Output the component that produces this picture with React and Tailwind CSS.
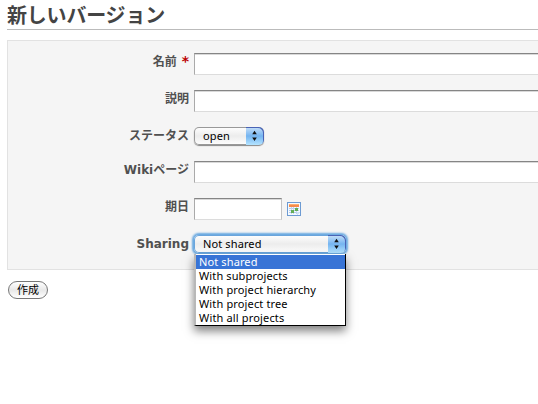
const labelFont = "font-['DejaVu_Sans','Noto_Sans_CJK_JP',sans-serif]";
const menuFont = "font-['Noto_Sans','Noto_Sans_CJK_JP',sans-serif]";

const options = [
  ['Not shared', 'tracking-[0.12px]'],
  ['With subprojects', 'tracking-[0.12px]'],
  ['With project hierarchy', 'tracking-[0.14px]'],
  ['With project tree', 'tracking-[0.14px]'],
  ['With all projects', 'tracking-[0.16px]'],
];

function Row({ label, height = 'h-[37px]', children }) {
  return (
    <div className={`flex items-start ${height}`}>
      <div className="w-[181px] shrink-0 whitespace-nowrap text-right text-[12px] leading-[18px] font-bold text-[#505050]">
        {label}
      </div>
      <div className="ml-[5px] flex min-w-0 flex-1 items-start">{children}</div>
    </div>
  );
}

function TextInput({ className }) {
  return (
    <div
      className={`h-[22px] border border-t-[#858585] border-r-[#c4c4c4] border-b-[#dcdcdc] border-l-[#aaaaaa] bg-white shadow-[inset_0_1px_0_#d9d9d9] ${className}`}
    />
  );
}

function Arrows() {
  return (
    <svg className="h-[18px] w-[17px]" viewBox="0 0 17 18">
      <path d="M8.5 3.8 L10.8 7.2 H6.2 Z M8.5 14 L10.8 10.6 H6.2 Z" fill="#111" />
    </svg>
  );
}

function Select({ value, className }) {
  return (
    <div
      className={`flex h-[18px] overflow-hidden rounded-[5px] bg-linear-to-b from-white via-[#ececec] to-white text-[11px] leading-[18px] text-black ${menuFont} ${className}`}
    >
      <span className="flex-1 pl-[9px] tracking-[0.12px] whitespace-nowrap">{value}</span>
      <span className="w-[18px] rounded-r-[5px] bg-linear-to-b from-[#c7e0f8] via-[#74b4f0] to-[#b4e4ff] shadow-[inset_-1px_1px_0_#4a63b5]">
        <Arrows />
      </span>
    </div>
  );
}

function CalendarIcon() {
  return (
    <svg className="mt-[4px] ml-[5px] h-[14px] w-[14px]" viewBox="0 0 14 14" shapeRendering="crispEdges">
      <rect width="14" height="14" fill="#6d9bd3" />
      <rect x="1" y="1" width="12" height="12" fill="#f5faff" />
      <rect x="2" y="2" width="10" height="3" fill="#f58b4c" />
      <rect x="2" y="2" width="10" height="1" fill="#ffad70" />
      <path d="M2 6h10v1H2z M2 8h10v1H2z M2 10h8v1H2z" fill="#b5cbea" />
      <path d="M4 5h1v7H4z M6 5h1v7H6z M9 5h1v7H9z" fill="#c3d5ee" />
      <path d="M8 6h3v3H8z M4 8h3v3H4z" fill="#64ad55" />
      <path d="M10 13v-3h3z" fill="#cfe2f7" />
    </svg>
  );
}

export default function App() {
  return (
    <div className={`h-[404px] w-[538px] overflow-hidden bg-white pl-[7px] ${labelFont}`}>
      <h2 className="h-[30px] border-b border-[#bbbbbb] pt-[3px] text-[20px] leading-[26px] font-bold whitespace-nowrap text-[#444444]">
        <span className="tracking-[-0.2px]">新しいバージョン</span>
      </h2>
      <div className="mt-[10px] h-[230px] border border-r-0 border-[#e2e2e2] bg-[#f5f5f5] pt-[12px]">
        <Row
          label={
            <span className="flex justify-end">
              名前
              <span className="-mt-px ml-[5px] text-[14px] text-[#bb0000]">*</span>
            </span>
          }
        >
          <TextInput className="flex-1 border-r-0" />
        </Row>
        <Row label="説明">
          <TextInput className="flex-1 border-r-0" />
        </Row>
        <Row label="ステータス" height="h-[34px]">
          <Select value="open" className="w-[70px] shadow-[inset_0_0_0_1px_#999,0_1px_1px_#888]" />
        </Row>
        <Row label="Wikiページ">
          <TextInput className="flex-1 border-r-0" />
        </Row>
        <Row label="期日">
          <TextInput className="w-[88px]" />
          <CalendarIcon />
        </Row>
        <Row label="Sharing">
          <div className="relative">
            <Select value="Not shared" className="w-[152px] shadow-[inset_0_0_0_1px_#6aa5dc,0_0_2px_1.5px_#68a8e0]" />
            <div className={`absolute top-[19px] left-0 h-[72px] w-[152px] border-r border-b border-l-2 border-r-black border-b-black border-l-[#b8b8b8] bg-white pt-px text-[11px] text-black shadow-[0_5px_9px_rgba(0,0,0,0.5)] ${menuFont}`}>
              {options.map(([text, spacing], i) => (
                <div
                  key={text}
                  className={`h-[14px] pl-[3px] leading-[14px] whitespace-nowrap ${spacing} ${i === 0 ? 'bg-[#3874d6] text-white' : ''}`}
                >
                  {text}
                </div>
              ))}
            </div>
          </div>
        </Row>
      </div>
      <button className={`mt-[11px] ml-px flex h-[18px] w-[40px] items-center justify-center rounded-full border border-[#777777] bg-linear-to-b from-white via-[#e8e8e8] to-white text-[11px] leading-[16px] text-black ${menuFont}`}>
        作成
      </button>
    </div>
  );
}
